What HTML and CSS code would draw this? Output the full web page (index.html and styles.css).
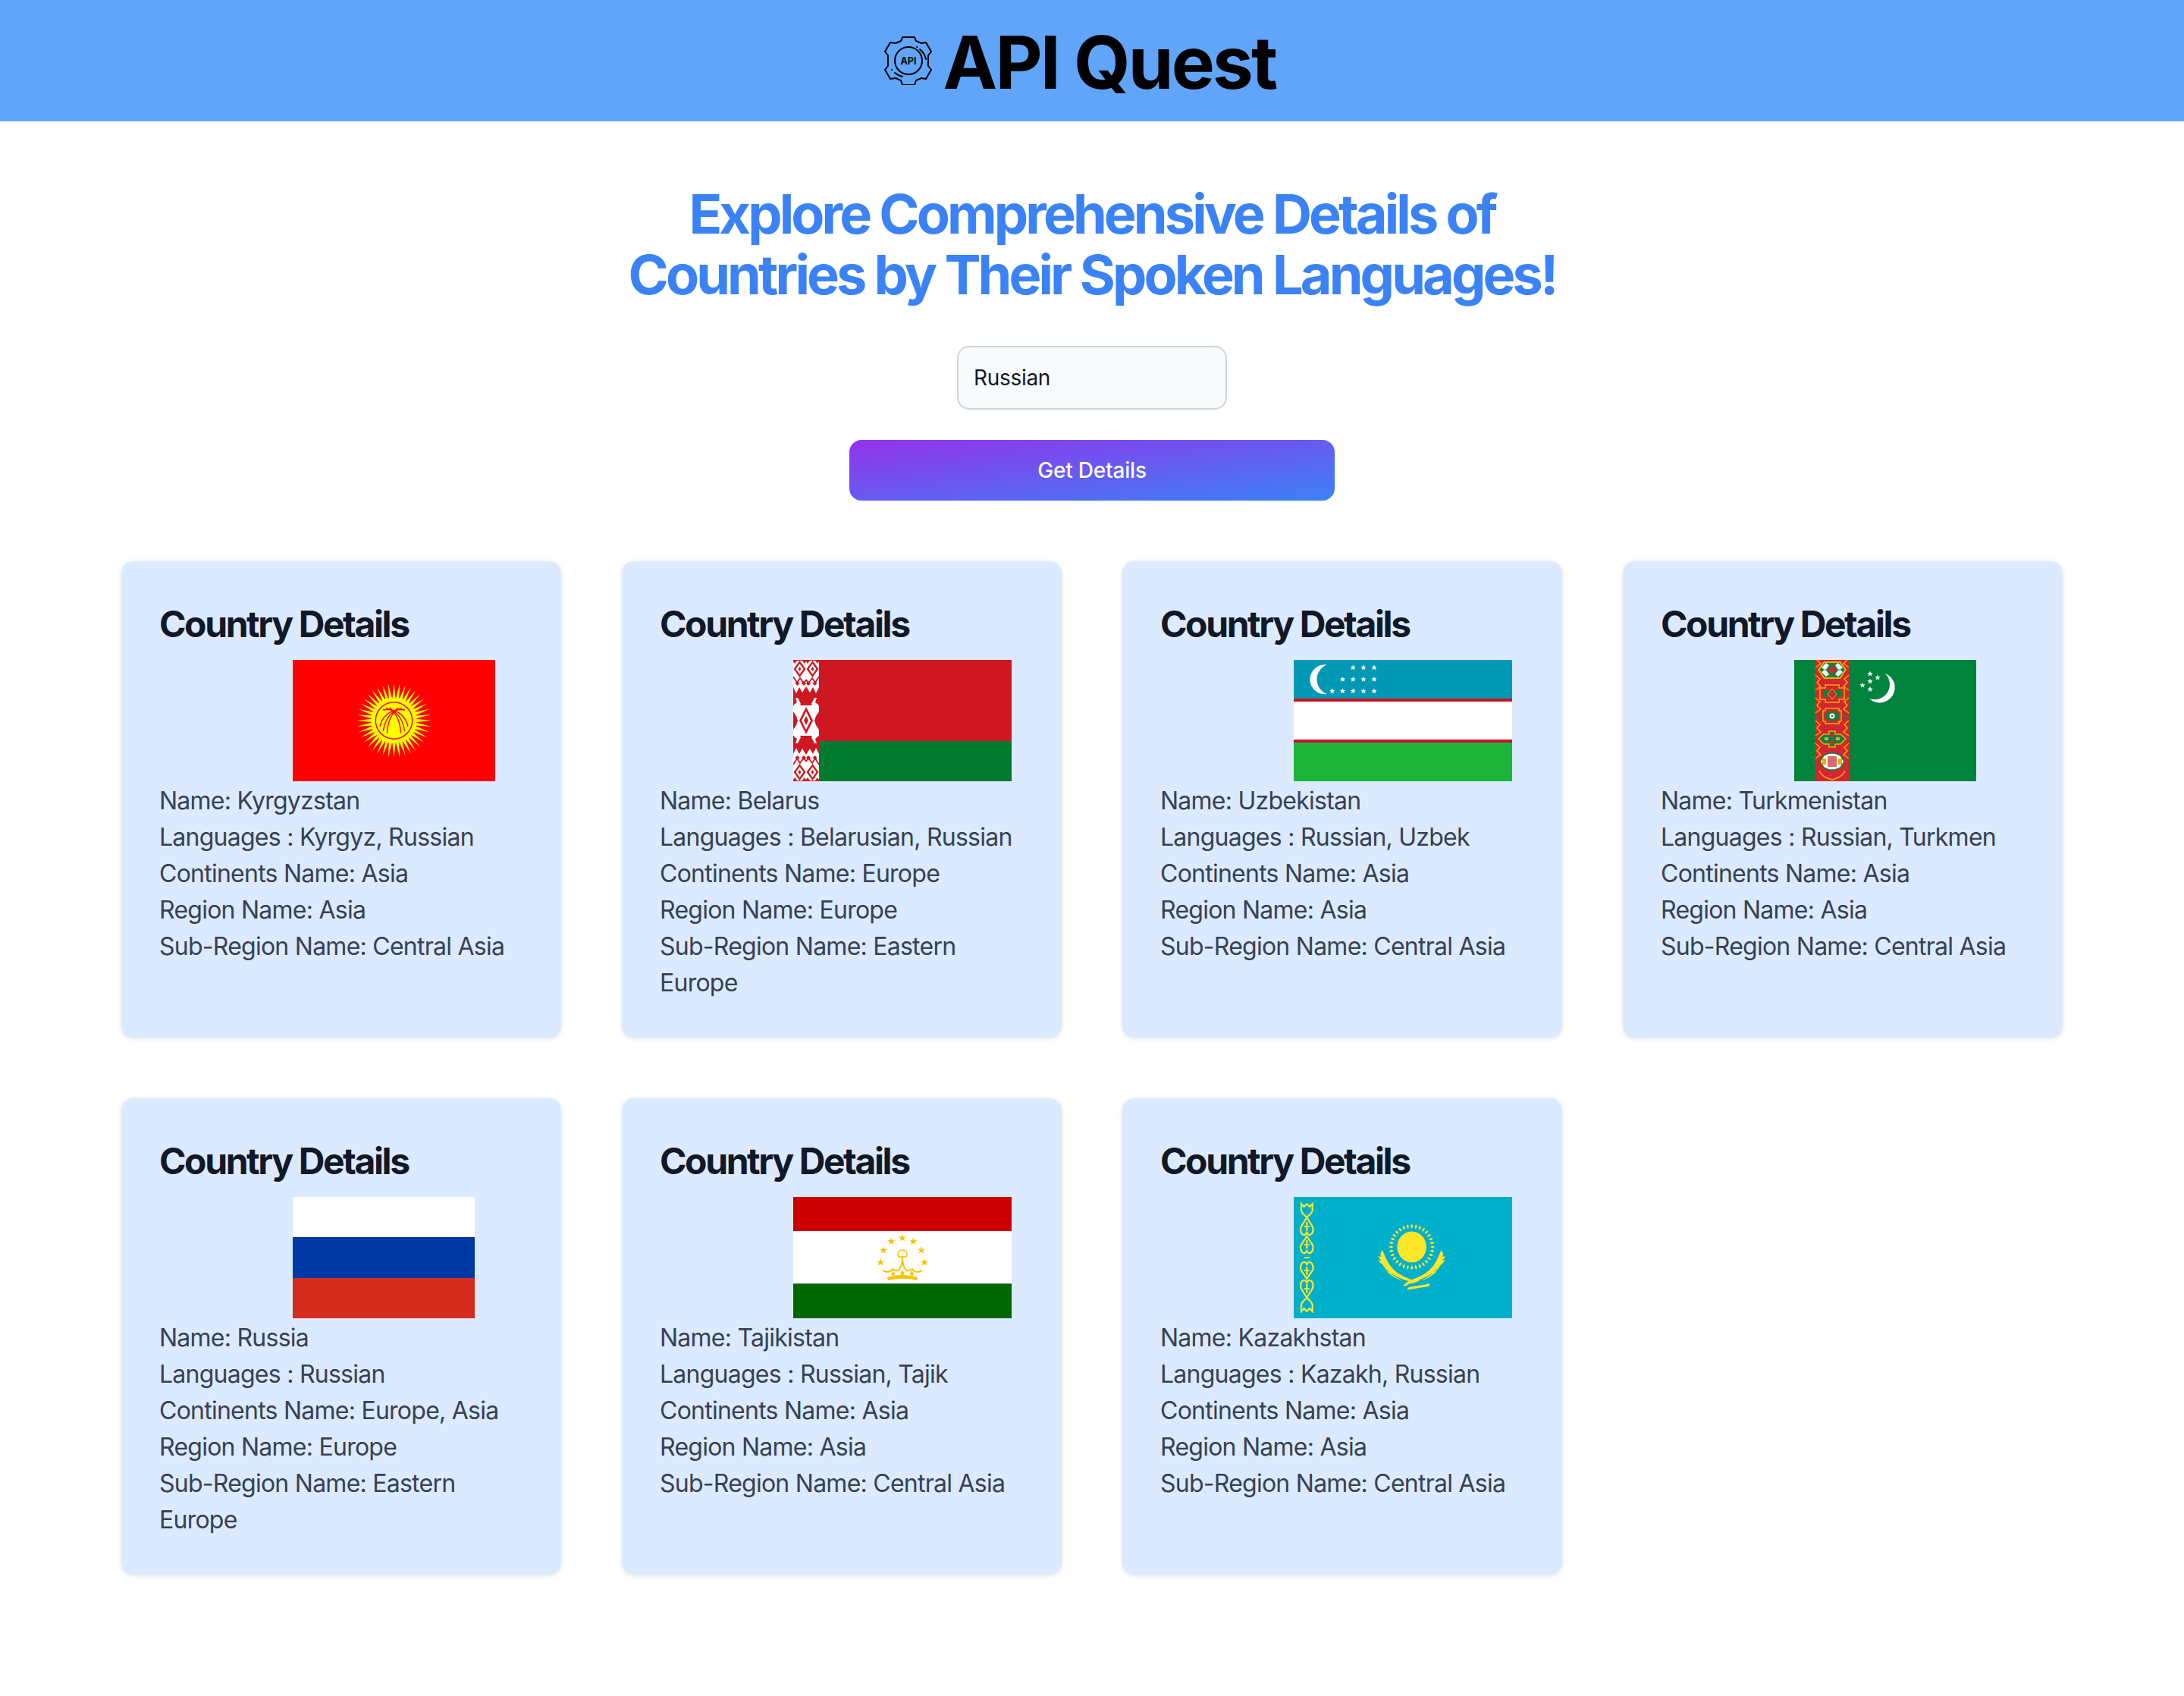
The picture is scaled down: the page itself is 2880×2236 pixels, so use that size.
FILE: index.html
```html
<!DOCTYPE html>
<html>
<head>
  <title>API Quest</title>
  <link rel="stylesheet" href="styles.css">
</head>
<body>
  <header class="topbar">
    <svg class="logo" viewBox="0 0 64 64" fill="none" stroke="#000" stroke-width="2" stroke-linejoin="round" stroke-linecap="round">
      <path d="M24 1h16l2 5 7 3 6-1 7 12-4 5v14l4 5-7 12-6-1-7 3-2 6H24l-2-6-7-3-7 1-7-12 4-5V25l-4-5 7-12 7 1 7-3z"/>
      <circle cx="32" cy="32" r="18"/>
      <path d="M43 14h.1M47 17a23 23 0 0 1 8 13M10 44h.1M14 48a23 23 0 0 0 10 5"/>
      <text class="logo-text" x="32" y="36.500">API</text>
    </svg>
    <h1 class="brand">API Quest</h1>
  </header>

  <main class="page">
    <h2 class="headline">Explore Comprehensive Details of<br>Countries by Their Spoken Languages!</h2>

    <form class="search">
      <input class="search-input" type="text" value="Russian">
      <button class="search-button" type="button">Get Details</button>
    </form>

    <section class="cards">
      <article class="card">
        <h3 class="card-title">Country Details</h3>
        <svg class="flag" width="267" height="160" viewBox="0 0 267 160">
          <defs>
            <g id="kg-rays">
              <path id="kg-ray" d="M131.300 52l2.200-21 2.200 21z" fill="#ff0"/>
              <use href="#kg-ray" transform="rotate(9 133.500 80)"/>
              <use href="#kg-ray" transform="rotate(18 133.500 80)"/>
              <use href="#kg-ray" transform="rotate(27 133.500 80)"/>
              <use href="#kg-ray" transform="rotate(36 133.500 80)"/>
            </g>
          </defs>
          <rect width="267" height="160" fill="#f00"/>
          <use href="#kg-rays"/>
          <use href="#kg-rays" transform="rotate(45 133.500 80)"/>
          <use href="#kg-rays" transform="rotate(90 133.500 80)"/>
          <use href="#kg-rays" transform="rotate(135 133.500 80)"/>
          <use href="#kg-rays" transform="rotate(180 133.500 80)"/>
          <use href="#kg-rays" transform="rotate(225 133.500 80)"/>
          <use href="#kg-rays" transform="rotate(270 133.500 80)"/>
          <use href="#kg-rays" transform="rotate(315 133.500 80)"/>
          <circle cx="133.500" cy="80" r="30" fill="#ff0"/>
          <circle cx="133.500" cy="80" r="25" fill="#f00"/>
          <circle cx="133.500" cy="80" r="23.500" fill="#ff0"/>
          <g fill="none" stroke="#f00" stroke-width="1.400">
            <path d="M115 88C118 74 130 63 148 66M119.500 94C121 79 130 66 144 64M124.500 97C125 84 130 71 139 63"/>
            <path d="M152 88C149 74 137 63 119 66M147.500 94C146 79 137 66 123 64M142.500 97C142 84 137 71 128 63"/>
          </g>
        </svg>
        <p class="line">Name: Kyrgyzstan</p>
        <p class="line">Languages : Kyrgyz, Russian</p>
        <p class="line">Continents Name: Asia</p>
        <p class="line">Region Name: Asia</p>
        <p class="line">Sub-Region Name: Central Asia</p>
      </article>

      <article class="card">
        <h3 class="card-title">Country Details</h3>
        <svg class="flag" width="288" height="160" viewBox="0 0 288 160">
          <defs>
            <g id="by-quarter">
              <path d="M8.500 1l8 11-8 11-8-11z" fill="#ce1720"/>
              <path d="M8.500 5l5 7-5 7-5-7z" fill="#fff"/>
              <path d="M8.500 9l2 3-2 3-2-3z" fill="#ce1720"/>
              <path d="M0 0h17v2l-2 3-3-4H5L2 5 0 2z" fill="#ce1720"/>
              <path d="M0 22l5 8 4-6 5 7 3-5" fill="none" stroke="#ce1720" stroke-width="1.800"/>
              <path d="M5.500 28l3 3-3 3-3-3zM14 28l3 3-3 3-3-3z" fill="#ce1720"/>
              <path d="M0 36l4 8 4-8 4 7 5-8v25H0z" fill="#ce1720"/>
              <path d="M3 50h3l4 8-3 6 4 7H5l-4-6v-6l4-3z" fill="#fff"/>
              <path d="M0 68l4 6 2 6H0z" fill="#ce1720"/>
              <path d="M17 62l-9 18h9z" fill="#ce1720"/>
              <path d="M17 68l-6 12h6z" fill="#fff"/>
              <path d="M17 74l-3 6h3z" fill="#ce1720"/>
            </g>
            <g id="by-half">
              <use href="#by-quarter"/>
              <use href="#by-quarter" transform="translate(34 0) scale(-1 1)"/>
            </g>
          </defs>
          <rect width="288" height="107" fill="#ce1720"/>
          <rect y="107" width="288" height="53" fill="#007c30"/>
          <rect width="34" height="160" fill="#fff"/>
          <use href="#by-half"/>
          <use href="#by-half" transform="translate(0 160) scale(1 -1)"/>
        </svg>
        <p class="line">Name: Belarus</p>
        <p class="line">Languages : Belarusian, Russian</p>
        <p class="line">Continents Name: Europe</p>
        <p class="line">Region Name: Europe</p>
        <p class="line">Sub-Region Name: Eastern Europe</p>
      </article>

      <article class="card">
        <h3 class="card-title">Country Details</h3>
        <svg class="flag" width="288" height="160" viewBox="0 0 288 160">
          <defs>
            <path id="uz-star" d="M0-3.800l1 2.600 2.700.1-2.100 1.700.8 2.700L0 1.700-2.400 3.300l.8-2.700-2.100-1.700 2.700-.1z" fill="#fff"/>
          </defs>
          <rect width="288" height="51.500" fill="#0099b5"/>
          <rect y="51" width="288" height="4" fill="#ce1126"/>
          <rect y="55" width="288" height="50" fill="#fff"/>
          <rect y="105" width="288" height="4" fill="#ce1126"/>
          <rect y="109" width="288" height="51" fill="#1eb53a"/>
          <path d="M44 6.500a19.500 19.500 0 1 0 0 38.500 20.500 20.500 0 0 1 0-38.500z" fill="#fff"/>
          <use href="#uz-star" x="78.300" y="10"/>
          <use href="#uz-star" x="92" y="10"/>
          <use href="#uz-star" x="106" y="10"/>
          <use href="#uz-star" x="64.500" y="25.500"/>
          <use href="#uz-star" x="78.300" y="25.500"/>
          <use href="#uz-star" x="92" y="25.500"/>
          <use href="#uz-star" x="106" y="25.500"/>
          <use href="#uz-star" x="50.700" y="41"/>
          <use href="#uz-star" x="64.500" y="41"/>
          <use href="#uz-star" x="78.300" y="41"/>
          <use href="#uz-star" x="92" y="41"/>
          <use href="#uz-star" x="106" y="41"/>
        </svg>
        <p class="line">Name: Uzbekistan</p>
        <p class="line">Languages : Russian, Uzbek</p>
        <p class="line">Continents Name: Asia</p>
        <p class="line">Region Name: Asia</p>
        <p class="line">Sub-Region Name: Central Asia</p>
      </article>

      <article class="card">
        <h3 class="card-title">Country Details</h3>
        <svg class="flag" width="240" height="160" viewBox="0 0 240 160">
          <defs>
            <path id="tm-star" d="M0-3.800l1 2.600 2.700.1-2.100 1.700.8 2.700L0 1.700-2.400 3.300l.8-2.700-2.100-1.700 2.700-.1z" fill="#fff"/>
            <path id="tm-side" d="M0 0l6 5-4 5 5 5-7 5M44 0l-6 5 4 5-5 5 7 5" fill="none" stroke="#f2a900" stroke-width="1.500"/>
          </defs>
          <rect width="240" height="160" fill="#00843d"/>
          <rect x="28" width="44" height="160" fill="#d22630"/>
          <use href="#tm-side" x="28" y="-10"/>
          <use href="#tm-side" x="28" y="20"/>
          <use href="#tm-side" x="28" y="50"/>
          <use href="#tm-side" x="28" y="80"/>
          <use href="#tm-side" x="28" y="110"/>
          <path d="M33 146c2 6 9 10 17 12 8-2 15-6 17-12" fill="none" stroke="#f2a900" stroke-width="1.500"/>
          <path d="M39 2h22l8 11-8 12H39l-8-12z" fill="#f2a900"/>
          <path d="M40 4h20l6.500 9-6.500 10H40l-6.500-10z" fill="#00843d"/>
          <path d="M36 10l6-6 4 3-5 7zM64 10l-6-6-4 3 5 7zM36 16l6 6 4-3-5-7zM64 16l-6 6-4-3 5-7z" fill="#fff"/>
          <path d="M50 7l6 6-6 6-6-6z" fill="#d22630"/>
          <path d="M41 33h18v4h7v15h-7v4H41v-4h-7V37h7z" fill="#d22630" stroke="#f2a900" stroke-width="1.500"/>
          <path d="M38 40h24v9H38z" fill="#00843d"/>
          <path d="M50 38l6 7-6 7-6-7z" fill="#d22630" stroke="#f2a900"/>
          <path d="M36 68h-3v3h3zM36 76h-3v3h3zM67 68h-3v3h3zM67 76h-3v3h3z" fill="#00843d"/>
          <path d="M41 64h18v3h3v14h-3v3H41v-3h-3V67h3z" fill="#d22630" stroke="#f2a900" stroke-width="1.500"/>
          <path d="M44 68h12v3h3v6h-3v3H44v-3h-3v-6h3z" fill="#00843d"/>
          <circle cx="50" cy="74" r="3.500" fill="#fff"/>
          <circle cx="50" cy="74" r="1.500" fill="#d22630"/>
          <path d="M32 104l7-6h7v-4h8v4h7l7 6-7 7h-7v4h-8v-4h-7z" fill="#00843d" stroke="#f2a900" stroke-width="1.500"/>
          <circle cx="50" cy="99" r="3" fill="#d22630"/>
          <circle cx="50" cy="109" r="3" fill="#d22630"/>
          <path d="M40 102h5v4h-5zM55 102h5v4h-5z" fill="#e0a04a"/>
          <path d="M34 134l5-8 7-3h8l7 3 5 8-5 8-7 3h-8l-7-3z" fill="#fff" stroke="#00843d" stroke-width="1.500"/>
          <path d="M44 127h12v14H44z" fill="#d22630" opacity=".7"/>
          <path d="M37 130h5v8h-5zM58 130h5v8h-5z" fill="#f2a900"/>
          <path d="M119.700 17.700A20 20 0 1 1 99 51 20 20 0 0 0 119.700 17.700z" fill="#fff"/>
          <use href="#tm-star" x="100" y="18.300"/>
          <use href="#tm-star" x="110" y="23.300"/>
          <use href="#tm-star" x="100" y="28.300"/>
          <use href="#tm-star" x="90" y="33.300"/>
          <use href="#tm-star" x="100" y="38.600"/>
        </svg>
        <p class="line">Name: Turkmenistan</p>
        <p class="line">Languages : Russian, Turkmen</p>
        <p class="line">Continents Name: Asia</p>
        <p class="line">Region Name: Asia</p>
        <p class="line">Sub-Region Name: Central Asia</p>
      </article>

      <article class="card">
        <h3 class="card-title">Country Details</h3>
        <svg class="flag" width="240" height="160" viewBox="0 0 240 160">
          <rect width="240" height="53.500" fill="#fff"/>
          <rect y="53" width="240" height="54" fill="#0039a6"/>
          <rect y="107" width="240" height="53" fill="#d52b1e"/>
        </svg>
        <p class="line">Name: Russia</p>
        <p class="line">Languages : Russian</p>
        <p class="line">Continents Name: Europe, Asia</p>
        <p class="line">Region Name: Europe</p>
        <p class="line">Sub-Region Name: Eastern Europe</p>
      </article>

      <article class="card">
        <h3 class="card-title">Country Details</h3>
        <svg class="flag" width="288" height="160" viewBox="0 0 288 160">
          <defs>
            <path id="tj-star" d="M0-5l1.300 3.400 3.600.1-2.800 2.300 1 3.500L0 2.300-3.100 4.300l1-3.500-2.800-2.300 3.600-.1z" fill="#f8c300"/>
            <path id="tj-small" d="M0-3.500l1.200 2.200 2.300.6-1.800 1.500.1 2.400-1.800-1-1.800 1 .1-2.400-1.800-1.500 2.300-.6z" fill="#f8c300"/>
          </defs>
          <rect width="288" height="45.500" fill="#c00"/>
          <rect y="45" width="288" height="69.500" fill="#fff"/>
          <rect y="114.300" width="288" height="45.700" fill="#060"/>
          <use href="#tj-star" x="144" y="54"/>
          <use href="#tj-star" x="129.300" y="58.700"/>
          <use href="#tj-star" x="158.300" y="58.700"/>
          <use href="#tj-star" x="119" y="70.300"/>
          <use href="#tj-star" x="169" y="70.300"/>
          <use href="#tj-star" x="115.300" y="86.300"/>
          <use href="#tj-star" x="173" y="86.300"/>
          <g fill="none" stroke="#f8c300" stroke-width="2">
            <path d="M139 79h10c1-1 1-2 1-4a6 5 0 0 0-12 0c0 2 0 3 1 4z" stroke-width="1.600"/>
            <path d="M144 79c0 9-2 16-6 18-3 1-5 0-7-2-2 4-7 5-13 2"/>
            <path d="M144 79c0 9 2 16 6 18 3 1 5 0 7-2 2 4 7 5 13 2"/>
          </g>
          <path d="M124 106c12-4 28-4 40 0l-1 4c-12-3-26-3-38 0z" fill="#f8c300"/>
          <use href="#tj-small" x="131.700" y="101"/>
          <use href="#tj-small" x="144" y="100.500"/>
          <use href="#tj-small" x="156.300" y="101"/>
        </svg>
        <p class="line">Name: Tajikistan</p>
        <p class="line">Languages : Russian, Tajik</p>
        <p class="line">Continents Name: Asia</p>
        <p class="line">Region Name: Asia</p>
        <p class="line">Sub-Region Name: Central Asia</p>
      </article>

      <article class="card">
        <h3 class="card-title">Country Details</h3>
        <svg class="flag" width="288" height="160" viewBox="0 0 288 160">
          <defs>
            <g id="kz-rays">
              <path id="kz-ray" d="M155.700 42l-1.600-3.500 1.600-3 1.600 3z" fill="#ffe629"/>
              <use href="#kz-ray" transform="rotate(11.250 155.700 66)"/>
              <use href="#kz-ray" transform="rotate(22.500 155.700 66)"/>
              <use href="#kz-ray" transform="rotate(33.750 155.700 66)"/>
            </g>
            <g id="kz-wing">
              <path d="M116.700 70c2 4 4 9 6 13 4 9 12 17 23 22l11 5-5 1c-13-3-27-11-34-21l-6.500-6.500 4 .5-4-6 4 1-1-4z"/>
              <path d="M118 91l6 7 6 2-2 1 7 5 8 4c-10-2-19-9-25-19z"/>
            </g>
            <g id="kz-half" fill="none" stroke="#ffe629" stroke-width="2.200">
              <path d="M10 9l3.500 4 3.800-4 3.800 4 3.600-4v9c-1 5-5 6-7.400 9-2.400-3-6.400-4-7.400-9z"/>
              <path d="M17.300 27l-6.800 11c-3 5-1 11 2.500 12 2 .5 3.300-1 4.300-3 1 2 2.300 3.500 4.300 3 3.500-1 5.500-7 2.500-12z"/>
              <path d="M17.300 33v12M13.800 39h7"/>
              <path d="M17.300 52l-6.800 10c-3 4-1 11 2.500 12 2 .5 3.300-1 4.300-3 1 2 2.300 3.500 4.300 3 3.500-1 5.500-8 2.500-12z"/>
              <path d="M17.300 57v11M13.800 63h7M14 80h6.600"/>
            </g>
          </defs>
          <rect width="288" height="160" fill="#00afca"/>
          <use href="#kz-half"/>
          <use href="#kz-half" transform="translate(0 160) scale(1 -1)"/>
          <g fill="#ffe629">
            <use href="#kz-rays"/>
            <use href="#kz-rays" transform="rotate(45 155.700 66)"/>
            <use href="#kz-rays" transform="rotate(90 155.700 66)"/>
            <use href="#kz-rays" transform="rotate(135 155.700 66)"/>
            <use href="#kz-rays" transform="rotate(180 155.700 66)"/>
            <use href="#kz-rays" transform="rotate(225 155.700 66)"/>
            <use href="#kz-rays" transform="rotate(270 155.700 66)"/>
            <use href="#kz-rays" transform="rotate(315 155.700 66)"/>
            <ellipse cx="155.700" cy="66" rx="19.300" ry="20.500"/>
            <use href="#kz-wing"/>
            <use href="#kz-wing" transform="translate(311.400 0) scale(-1 1)"/>
            <path d="M144 117l6-5c6-4 14-5 20-9l-4 7c-4 3-10 4-15 5l-2 2z"/>
            <path d="M149 122l3-3 18-3 10-2-2 4-13 2-15 2.500z"/>
          </g>
        </svg>
        <p class="line">Name: Kazakhstan</p>
        <p class="line">Languages : Kazakh, Russian</p>
        <p class="line">Continents Name: Asia</p>
        <p class="line">Region Name: Asia</p>
        <p class="line">Sub-Region Name: Central Asia</p>
      </article>
    </section>
  </main>
</body>
</html>
```

FILE: styles.css
```css
* {
  box-sizing: border-box;
}

body {
  margin: 0;
  font-family: Inter, "Noto Sans", sans-serif;
  background-color: #fff;
}

.topbar {
  display: flex;
  justify-content: center;
  align-items: center;
  gap: 14px;
  height: 160px;
  padding: 4px 32px 0 0;
  background-color: #60a5fa;
}

.logo {
  width: 64px;
  height: 64px;
  flex: none;
  margin-top: -4px;
}

.logo-text {
  font-size: 12.500px;
  font-weight: 700;
  text-anchor: middle;
  fill: #000;
  stroke: none;
}

.brand {
  margin: 0;
  font-size: 96px;
  line-height: 96px;
  font-weight: 700;
  letter-spacing: -2.800px;
  color: #000;
}

.page {
  padding: 82px 160px 160px;
}

.headline {
  margin: 0 0 54px;
  font-size: 72px;
  line-height: 80px;
  font-weight: 700;
  letter-spacing: -3.900px;
  text-align: center;
  color: #3b82f6;
}

.search {
  display: flex;
  flex-direction: column;
  align-items: center;
  gap: 40px;
  margin-bottom: 80px;
}

.search-input {
  width: 356px;
  height: 84px;
  padding: 0 20px;
  font-family: inherit;
  font-size: 28px;
  letter-spacing: -0.300px;
  color: #111827;
  background-color: #f9fafb;
  border: 2px solid #d1d5db;
  border-radius: 16px;
}

.search-button {
  width: 640px;
  height: 80px;
  font-family: inherit;
  font-size: 28px;
  font-weight: 500;
  letter-spacing: -0.200px;
  color: #fff;
  background-image: linear-gradient(to bottom right, #9333ea, #3b82f6);
  border: none;
  border-radius: 16px;
}

.cards {
  display: grid;
  grid-template-columns: repeat(4, 580px);
  gap: 80px;
}

.card {
  height: 628px;
  padding: 48px;
  background-color: #dbeafe;
  border: 2px solid #dbeafe;
  border-radius: 16px;
  box-shadow: 0 1px 6px rgba(0, 0, 0, 0.12);
}

.card-title {
  margin: 0 0 14px;
  font-size: 48px;
  line-height: 66px;
  font-weight: 700;
  letter-spacing: -2.400px;
  color: #111827;
}

.flag {
  display: block;
  margin: 0 0 2px 176px;
}

.line {
  margin: 0;
  font-size: 32px;
  line-height: 48px;
  letter-spacing: -0.750px;
  color: #374151;
}
```
